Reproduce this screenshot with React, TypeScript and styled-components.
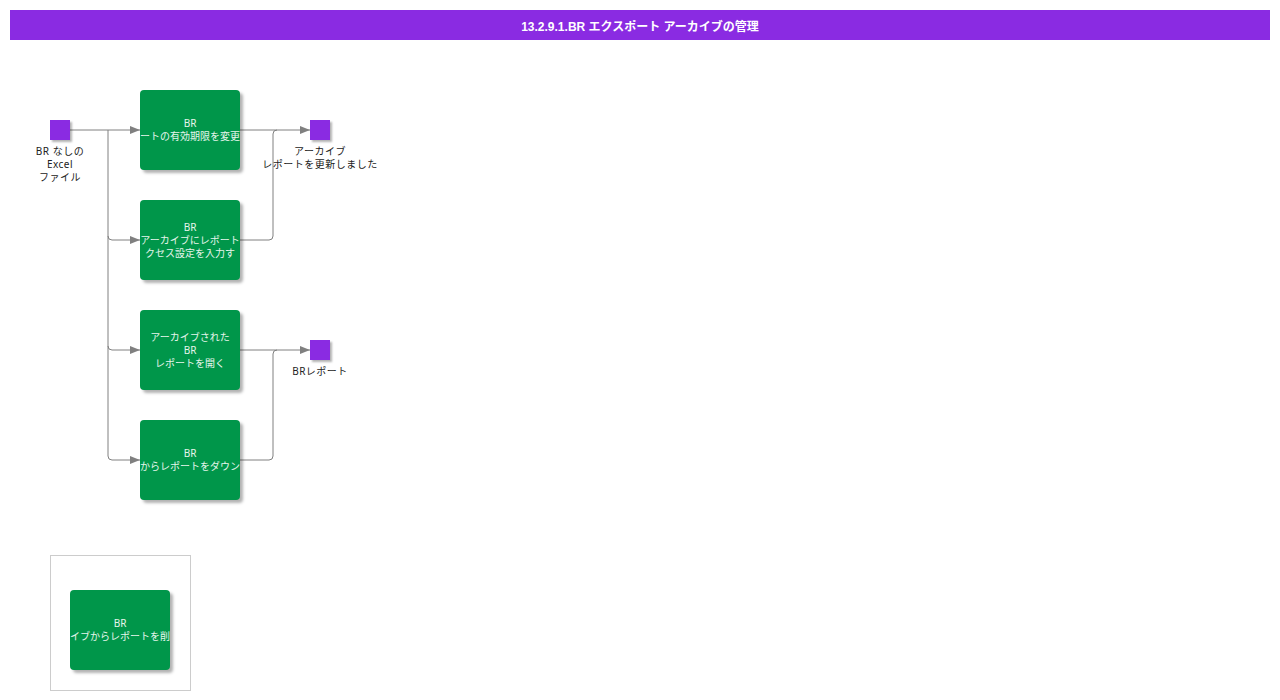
import React from "react";
import styled, { createGlobalStyle } from "styled-components";

const GlobalStyle = createGlobalStyle`
  html, body { margin: 0; padding: 0; background: #fff; }
  body { font-family: "Noto Sans", "Noto Sans CJK JP", sans-serif; }
`;

const Page = styled.div`
  width: 1280px;
  height: 700px;
  padding: 10px;
  box-sizing: border-box;
  display: flex;
  flex-direction: column;
`;

const TitleBar = styled.div`
  height: 30px;
  background: #8a2be2;
  color: #fff;
  font-family: "Liberation Sans", "Noto Sans CJK JP", sans-serif;
  font-weight: bold;
  font-size: 12px;
  display: flex;
  align-items: center;
  justify-content: center;
`;

const Canvas = styled.div`
  position: relative;
  flex: 1;
  margin: 0 -10px;
`;

const Wires = styled.svg`
  position: absolute;
  left: 0;
  top: -40px;
  width: 1280px;
  height: 700px;
  pointer-events: none;
`;

const Task = styled.div<{ x: number; y: number }>`
  position: absolute;
  left: ${(p) => p.x}px;
  top: ${(p) => p.y - 40}px;
  width: 100px;
  height: 80px;
  background: #00964a;
  border-radius: 4px;
  box-shadow: 3px 3px 3px rgba(0, 0, 0, 0.3);
  color: #fff;
  font-size: 10px;
  line-height: 13px;
  display: flex;
  flex-direction: column;
  align-items: center;
  justify-content: center;
  overflow: hidden;
  white-space: nowrap;
  text-align: center;
`;

const Line = styled.span`
  color: #e6f5ec;
`;

const Pin = styled.div<{ x: number; y: number }>`
  position: absolute;
  left: ${(p) => p.x}px;
  top: ${(p) => p.y - 40}px;
  width: 20px;
  height: 20px;
  background: #8a2be2;
  box-shadow: 2px 2px 2px rgba(0, 0, 0, 0.3);
`;

const PinLabel = styled.div<{ cx: number; y: number }>`
  position: absolute;
  left: ${(p) => p.cx - 80}px;
  top: ${(p) => p.y - 40}px;
  width: 160px;
  text-align: center;
  font-size: 10px;
  line-height: 13px;
  color: #222;
  letter-spacing: 0.5px;
`;

const Frame = styled.div`
  position: absolute;
  left: 50px;
  top: 515px;
  width: 139px;
  height: 134px;
  border: 1px solid #ccc;
`;

const tasks = [
  { y: 90, lines: ["BR", "ートの有効期限を変更"] },
  { y: 200, lines: ["BR", "アーカイブにレポート", "クセス設定を入力す"] },
  { y: 310, lines: ["アーカイブされた", "BR", "レポートを開く"] },
  { y: 420, lines: ["BR", "からレポートをダウン"] },
];

const arrow = (x: number, y: number) => `M${x - 10} ${y - 4} L${x} ${y} L${x - 10} ${y + 4} Z`;

export default function App() {
  const g = "#808080";
  return (
    <>
      <GlobalStyle />
      <Page>
        <TitleBar>13.2.9.1.BR エクスポート アーカイブの管理</TitleBar>
        <Canvas>
          <Wires viewBox="0 0 1280 700">
            <g stroke={g} fill="none" strokeWidth={1}>
              <path d="M70 130 H140" />
              <path d="M108 130 V456 Q108 460 112 460 H140" />
              <path d="M108 236 Q108 240 112 240 H140" />
              <path d="M108 346 Q108 350 112 350 H140" />
              <path d="M240 130 H310" />
              <path d="M240 240 H269 Q273 240 273 236 V134 Q273 130 277 130" />
              <path d="M240 350 H310" />
              <path d="M240 460 H269 Q273 460 273 456 V354 Q273 350 277 350" />
            </g>
            <g fill={g}>
              {[130, 240, 350, 460].map((y) => (
                <path key={y} d={arrow(140, y)} />
              ))}
              <path d={arrow(310, 130)} />
              <path d={arrow(310, 350)} />
            </g>
          </Wires>
          <Pin x={50} y={120} />
          <PinLabel cx={60} y={145}>
            BR なしの<br />Excel<br />ファイル
          </PinLabel>
          <Pin x={310} y={120} />
          <PinLabel cx={320} y={145}>
            アーカイブ<br />レポートを更新しました
          </PinLabel>
          <Pin x={310} y={340} />
          <PinLabel cx={320} y={365}>BRレポート</PinLabel>
          {tasks.map((t) => (
            <Task key={t.y} x={140} y={t.y}>
              {t.lines.map((l) => (
                <Line key={l}>{l}</Line>
              ))}
            </Task>
          ))}
          <Frame />
          <Task x={70} y={590}>
            <Line>BR</Line>
            <Line>イブからレポートを削</Line>
          </Task>
        </Canvas>
      </Page>
    </>
  );
}
